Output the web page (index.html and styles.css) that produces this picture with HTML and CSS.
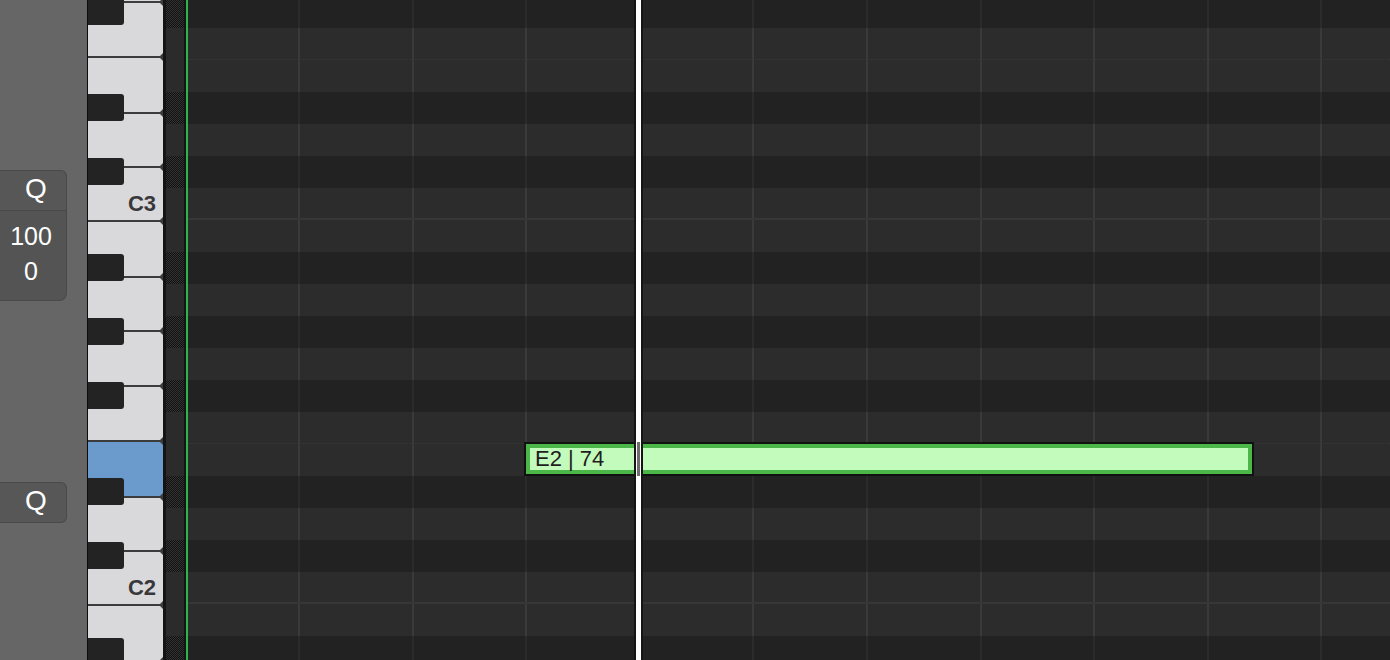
FILE: index.html
```html
<!DOCTYPE html>
<html lang="en">
<head>
    <meta charset="UTF-8">
    <meta name="viewport" content="width=device-width, initial-scale=1.0">
    <title>Piano Roll</title>
    <link rel="stylesheet" href="styles.css">
</head>
<body>
    <div class="roll">
        <aside class="panel">
            <div class="qbox">
                <button class="qbtn">Q</button>
                <div class="values">
                    <span>100</span>
                    <span>0</span>
                </div>
            </div>
            <button class="qbtn q-bottom">Q</button>
        </aside>

        <div class="keyboard">
            <div class="whites">
                <div class="key g"></div>
                <div class="key f"></div>
                <div class="key e"></div>
                <div class="key d"></div>
                <div class="key c">C3</div>
                <div class="key b"></div>
                <div class="key a"></div>
                <div class="key g"></div>
                <div class="key f"></div>
                <div class="key e on"></div>
                <div class="key d"></div>
                <div class="key c">C2</div>
                <div class="key b"></div>
                <div class="key a"></div>
            </div>
            <div class="blacks">
                <div class="bk"></div>
                <div class="bk wide"></div>
                <div class="bk"></div>
                <div class="bk wide"></div>
                <div class="bk"></div>
                <div class="bk"></div>
                <div class="bk wide"></div>
                <div class="bk"></div>
                <div class="bk wide"></div>
            </div>
        </div>

        <div class="lane">
            <div class="rows">
                <div class="row b"></div>
                <div class="row w"></div>
                <div class="row w"></div>
                <div class="row b"></div>
                <div class="row w"></div>
                <div class="row b"></div>
                <div class="row w"></div>
                <div class="row w"></div>
                <div class="row b"></div>
                <div class="row w"></div>
                <div class="row b"></div>
                <div class="row w"></div>
                <div class="row b"></div>
                <div class="row w"></div>
                <div class="row w"></div>
                <div class="row b"></div>
                <div class="row w"></div>
                <div class="row b"></div>
                <div class="row w"></div>
                <div class="row w"></div>
                <div class="row b"></div>
            </div>
        </div>

        <div class="grid">
            <div class="rows">
                <div class="row b"></div>
                <div class="row w f"></div>
                <div class="row w"></div>
                <div class="row b"></div>
                <div class="row w"></div>
                <div class="row b"></div>
                <div class="row w c"></div>
                <div class="row w"></div>
                <div class="row b"></div>
                <div class="row w"></div>
                <div class="row b"></div>
                <div class="row w"></div>
                <div class="row b"></div>
                <div class="row w f"></div>
                <div class="row w"></div>
                <div class="row b"></div>
                <div class="row w"></div>
                <div class="row b"></div>
                <div class="row w c"></div>
                <div class="row w"></div>
                <div class="row b"></div>
            </div>

            <div class="note">E2 | 74</div>
            <div class="playhead"></div>
        </div>
    </div>
</body>
</html>
```

FILE: styles.css
```css
* {
    box-sizing: border-box;
}
body {
    margin: 0;
    background-color: #222;
    font-family: "Liberation Sans", Arial, sans-serif;
    overflow: hidden;
}
.roll {
    display: flex;
    height: 660px;
    overflow: hidden;
}

/* left side panel */
.panel {
    width: 88px;
    flex: none;
    background-color: #666;
    border-right: 1px solid #0c0c0c;
    padding-top: 170px;
}
.qbtn {
    display: block;
    width: 67px;
    height: 41px;
    margin: 0;
    padding: 0 0 3px 6px;
    background-color: #575757;
    border: 1px solid #494949;
    border-left: none;
    color: #fff;
    font-family: inherit;
    font-size: 28px;
    line-height: 36px;
    text-align: center;
}
.qbox .qbtn {
    border-radius: 0 6px 0 0;
}
.values {
    width: 67px;
    height: 90px;
    display: flex;
    flex-direction: column;
    padding: 8px 4px 0 0;
    background-color: #545454;
    border: 1px solid #494949;
    border-top: none;
    border-left: none;
    border-radius: 0 0 8px 0;
    color: #fff;
    font-size: 25px;
    line-height: 35px;
    text-align: center;
}
.q-bottom {
    margin-top: 181px;
    border-radius: 0 6px 6px 0;
}

/* keyboard */
.keyboard {
    width: 78px;
    flex: none;
    position: relative;
    overflow: hidden;
    border-right: 3px solid #141414;
}
.whites {
    margin-top: -54px;
}
.key {
    position: relative;
    display: flex;
    justify-content: flex-end;
    align-items: flex-end;
    padding: 0 7px 5px 0;
    background-color: #d9d9db;
    border-top: 2px solid #3c3c3c;
    color: #38383a;
    font-size: 22px;
    font-weight: bold;
    line-height: 1;
}
.key::after {
    content: "";
    position: absolute;
    right: 0;
    top: -5px;
    border-style: solid;
    border-width: 4px 4px 4px 0;
    border-color: transparent #3c3c3c transparent transparent;
}
.key.c { height: 54px; }
.key.d { height: 54px; }
.key.e { height: 56px; }
.key.f { height: 55px; }
.key.g { height: 55px; }
.key.a { height: 54px; }
.key.b { height: 56px; }
.key.on {
    background-color: #6b9bcc;
}
.blacks {
    position: absolute;
    top: 0;
    left: 0;
    display: flex;
    flex-direction: column;
}
.bk {
    flex: none;
    width: 36px;
    height: 27px;
    margin-top: 37px;
    background-color: #232323;
    border-radius: 0 3px 3px 0;
}
.bk:first-child {
    margin-top: -2px;
}
.bk.wide {
    margin-top: 69px;
}

/* rows */
.rows {
    margin-top: -4px;
}
.row {
    height: 32px;
}
.lane {
    width: 20px;
    flex: none;
    border-right: 2px solid #151515;
}
.lane .row.w {
    background-color: #2b2b2b;
}
.lane .row.b {
    background: repeating-conic-gradient(#111 0 25%, #333 0 50%) 0 0 / 2px 2px;
}

/* grid */
.grid {
    flex: 1;
    position: relative;
    overflow: hidden;
    border-left: 2px solid #2db44c;
}
.grid .row.w {
    background: #2c2c2c repeating-linear-gradient(90deg, transparent 0 110px, #3a3a3a 110px 112px, transparent 112px 113.6px);
}
.grid .row.b {
    background: #222 repeating-linear-gradient(90deg, transparent 0 110px, #2b2b2b 110px 112px, transparent 112px 113.6px);
}
.grid .row.f {
    border-bottom: 1px dotted #383838;
}
.grid .row.c {
    border-bottom: 2px solid #373737;
}
.note {
    position: absolute;
    left: 336px;
    top: 442px;
    width: 730px;
    height: 34px;
    padding-left: 9px;
    background-color: #c3fbbd;
    border: 2px solid #111;
    box-shadow: inset 0 0 0 4px #4bb748;
    color: #1e1e1e;
    font-size: 22px;
    line-height: 30px;
}
.playhead {
    position: absolute;
    left: 446px;
    top: 0;
    bottom: 0;
    width: 9px;
    background-color: #fff;
    border-left: 2px solid #151515;
    border-right: 2px solid #151515;
}
.playhead::after {
    content: "";
    position: absolute;
    top: 442px;
    left: 1px;
    right: 1px;
    height: 34px;
    background-color: #6d6d6d;
}
```
